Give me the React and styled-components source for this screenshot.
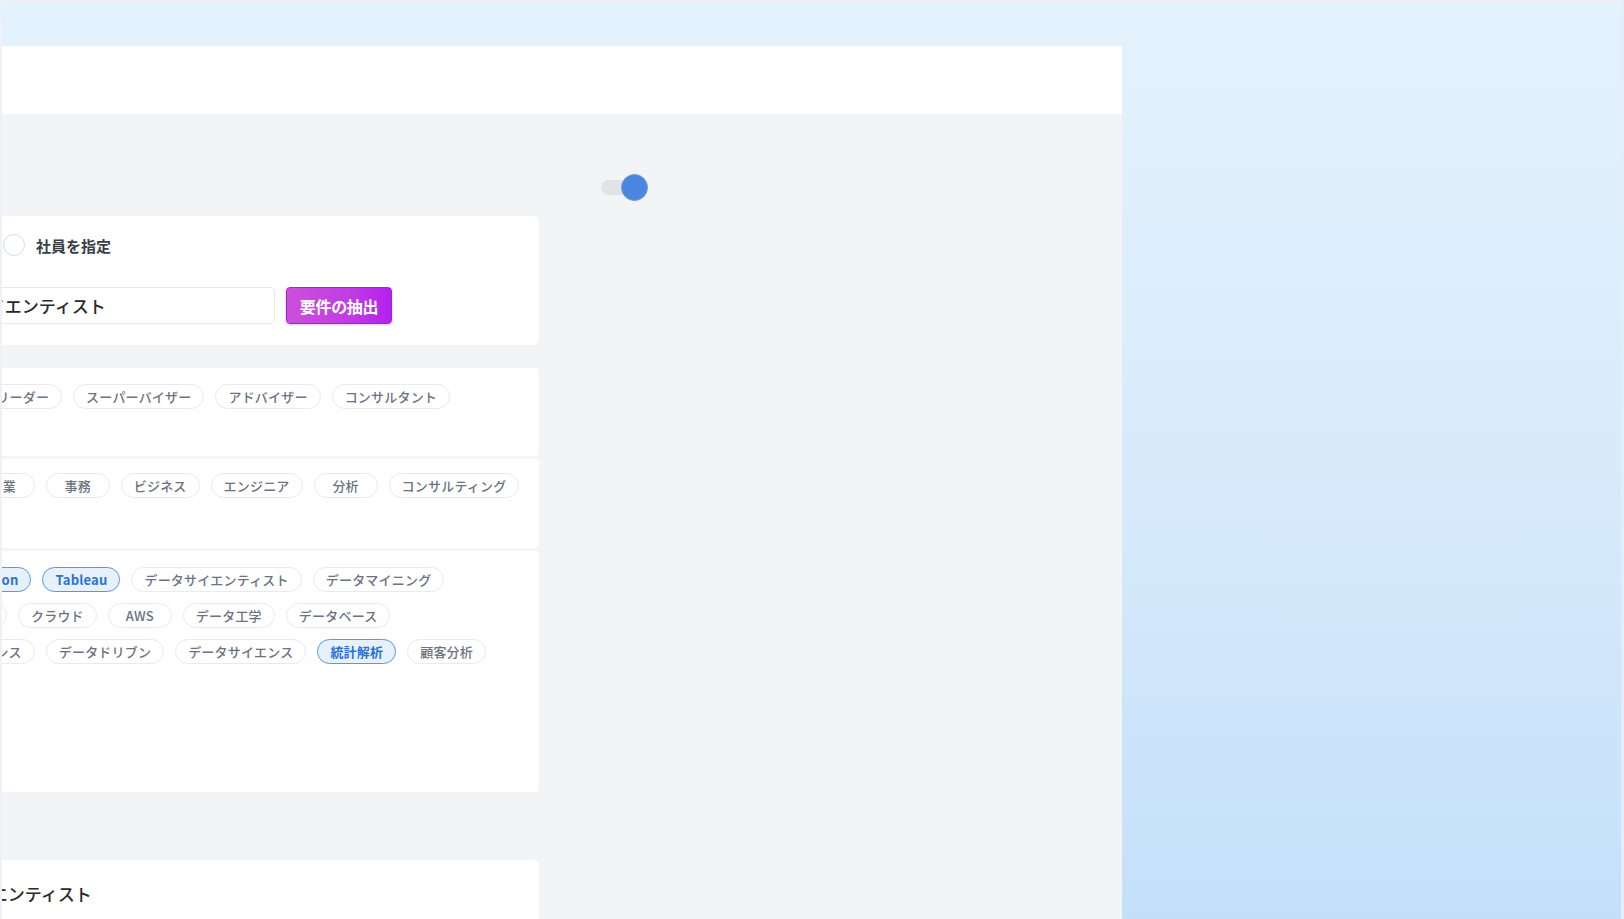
import styled, { createGlobalStyle } from "styled-components";

const GlobalStyle = createGlobalStyle`
  html, body {
    margin: 0;
    padding: 0;
    height: 100%;
    overflow: hidden;
  }
  body {
    font-family: "Noto Sans CJK JP", "Noto Sans", sans-serif;
    color: #333;
  }
`;

const Page = styled.div`
  box-sizing: border-box;
  height: 100vh;
  padding-top: 46px;
  background: linear-gradient(180deg, #e4f2fd 0%, #d8ebfb 50%, #c4e0f9 100%);
  border-top: 2px solid #eef2f6;
  border-left: 2px solid #eef2f6;
  border-right: 3px solid #e4eefa;
  overflow: hidden;
`;

const Frame = styled.div`
  width: 1120px;
  height: calc(100vh - 46px);
  display: flex;
  flex-direction: column;
  margin-top: -2px;
`;

const Header = styled.header`
  height: 68px;
  flex-shrink: 0;
  background: #fff;
`;

const Body = styled.div`
  flex: 1;
  display: flex;
  background: #f3f4f6;
  overflow: hidden;
`;

const Main = styled.main`
  flex-shrink: 0;
  width: 695px;
  margin-left: -158px;
  padding-top: 102px;
  display: flex;
  flex-direction: column;
`;

const Aside = styled.aside`
  padding: 60px 0 0 62px;
`;

const Card = styled.section`
  background: #fff;
  border-radius: 6px;
  padding: 18px 24px 21px;
  display: flex;
  flex-direction: column;
  gap: 31px;
`;

const RadioGroup = styled.div`
  display: flex;
  gap: 27px;
`;

const RadioOption = styled.label`
  display: flex;
  align-items: center;
  gap: 11px;
  font-size: 15px;
  font-weight: 700;
  color: #3a3f47;
  height: 22px;
`;

const RadioCircle = styled.span`
  box-sizing: border-box;
  width: 22px;
  height: 22px;
  border-radius: 50%;
  border: 1.5px solid #d9dce1;
  background: #fff;
`;

const InputRow = styled.div`
  display: flex;
  align-items: center;
  gap: 11px;
`;

const FieldLabel = styled.span`
  font-size: 15px;
  font-weight: 700;
  color: #3a3f47;
`;

const TextInput = styled.div`
  box-sizing: border-box;
  width: 366px;
  height: 37px;
  border: 1px solid #e6e8ec;
  border-radius: 4px;
  padding: 0 10px;
  display: flex;
  align-items: center;
  font-size: 17px;
  font-weight: 500;
  color: #2a2a2a;
  white-space: nowrap;
`;

const ExtractButton = styled.button`
  box-sizing: border-box;
  height: 37px;
  width: 106px;
  padding: 0;
  border: 1px solid #a91fd6;
  border-radius: 4px;
  background: linear-gradient(90deg, #cb50da 0%, #c13ce4 60%, #b420ee 100%);
  color: #fff;
  font-family: inherit;
  font-size: 16px;
  font-weight: 700;
  letter-spacing: -0.3px;
  box-shadow: 0 1px 2px rgba(120, 20, 160, 0.25);
`;

const SectionStack = styled.div`
  margin-top: 23px;
  display: flex;
  flex-direction: column;
  gap: 3px;
`;

const Section = styled.div`
  box-sizing: border-box;
  min-height: ${(p) => p.$h}px;
  background: #fff;
  border-radius: 4px;
  padding: ${(p) => p.$top}px 24px 16px;
  display: flex;
  flex-direction: column;
  gap: 11px;
`;

const ChipRow = styled.div`
  display: flex;
  gap: 11px;
`;

const Chip = styled.span`
  box-sizing: border-box;
  flex-shrink: 0;
  height: 25px;
  min-width: 64px;
  padding: 0 12px;
  border-radius: 13px;
  display: inline-flex;
  align-items: center;
  justify-content: center;
  font-size: 13px;
  letter-spacing: 0.2px;
  white-space: nowrap;
  border: ${(p) => (p.$on ? "1.5px solid #5b97e2" : "1px solid #e8eaee")};
  background: ${(p) => (p.$on ? "#e7f1fc" : "#fff")};
  color: ${(p) => (p.$on ? "#2b72d6" : "#6b7280")};
  font-weight: ${(p) => (p.$on ? 700 : 500)};
`;

const ResultCard = styled.section`
  margin-top: 68px;
  background: #fff;
  border-radius: 6px;
  padding: 22px 24px 40px 62px;
  font-size: 17px;
  font-weight: 500;
  line-height: 24px;
  color: #2a2a2a;
`;

const Toggle = styled.div`
  position: relative;
  width: 45px;
  height: 27px;
  display: flex;
  align-items: center;
`;

const Track = styled.span`
  width: 40px;
  height: 15px;
  border-radius: 8px;
  background: #e1e3e7;
`;

const Knob = styled.span`
  position: absolute;
  right: -2px;
  top: 0;
  box-sizing: border-box;
  width: 27px;
  height: 27px;
  border-radius: 50%;
  background: #4b86df;
  border: 1px solid #6a9ae6;
`;

const sections = [
  { h: 88, top: 16, rows: [["マネージャー", "リーダー", "スーパーバイザー", "アドバイザー", "コンサルタント"]] },
  { h: 89, top: 14, rows: [["デザイナー", "営業", "事務", "ビジネス", "エンジニア", "分析", "コンサルティング"]] },
  {
    h: 241,
    top: 16,
    rows: [
      ["機械学習", "*Python", "*Tableau", "データサイエンティスト", "データマイニング"],
      ["R", "BI", "クラウド", "AWS", "データ工学", "データベース"],
      ["BI", "ガバナンス", "データドリブン", "データサイエンス", "*統計解析", "顧客分析"],
    ],
  },
];

export default function App() {
  return (
    <>
      <GlobalStyle />
      <Page>
        <Frame>
          <Header />
          <Body>
            <Main>
              <Card>
                <RadioGroup>
                  <RadioOption>
                    <RadioCircle />
                    職種を指定
                  </RadioOption>
                  <RadioOption>
                    <RadioCircle />
                    社員を指定
                  </RadioOption>
                </RadioGroup>
                <InputRow>
                  <FieldLabel>職種</FieldLabel>
                  <TextInput>データサイエンティスト</TextInput>
                  <ExtractButton>要件の抽出</ExtractButton>
                </InputRow>
              </Card>

              <SectionStack>
                {sections.map((s, i) => (
                  <Section key={i} $h={s.h} $top={s.top}>
                    {s.rows.map((row, j) => (
                      <ChipRow key={j}>
                        {row.map((t, k) => {
                          const on = t.startsWith("*");
                          return (
                            <Chip key={k} $on={on}>
                              {on ? t.slice(1) : t}
                            </Chip>
                          );
                        })}
                      </ChipRow>
                    ))}
                  </Section>
                ))}
              </SectionStack>

              <ResultCard>データサイエンティスト</ResultCard>
            </Main>
            <Aside>
              <Toggle>
                <Track />
                <Knob />
              </Toggle>
            </Aside>
          </Body>
        </Frame>
      </Page>
    </>
  );
}
